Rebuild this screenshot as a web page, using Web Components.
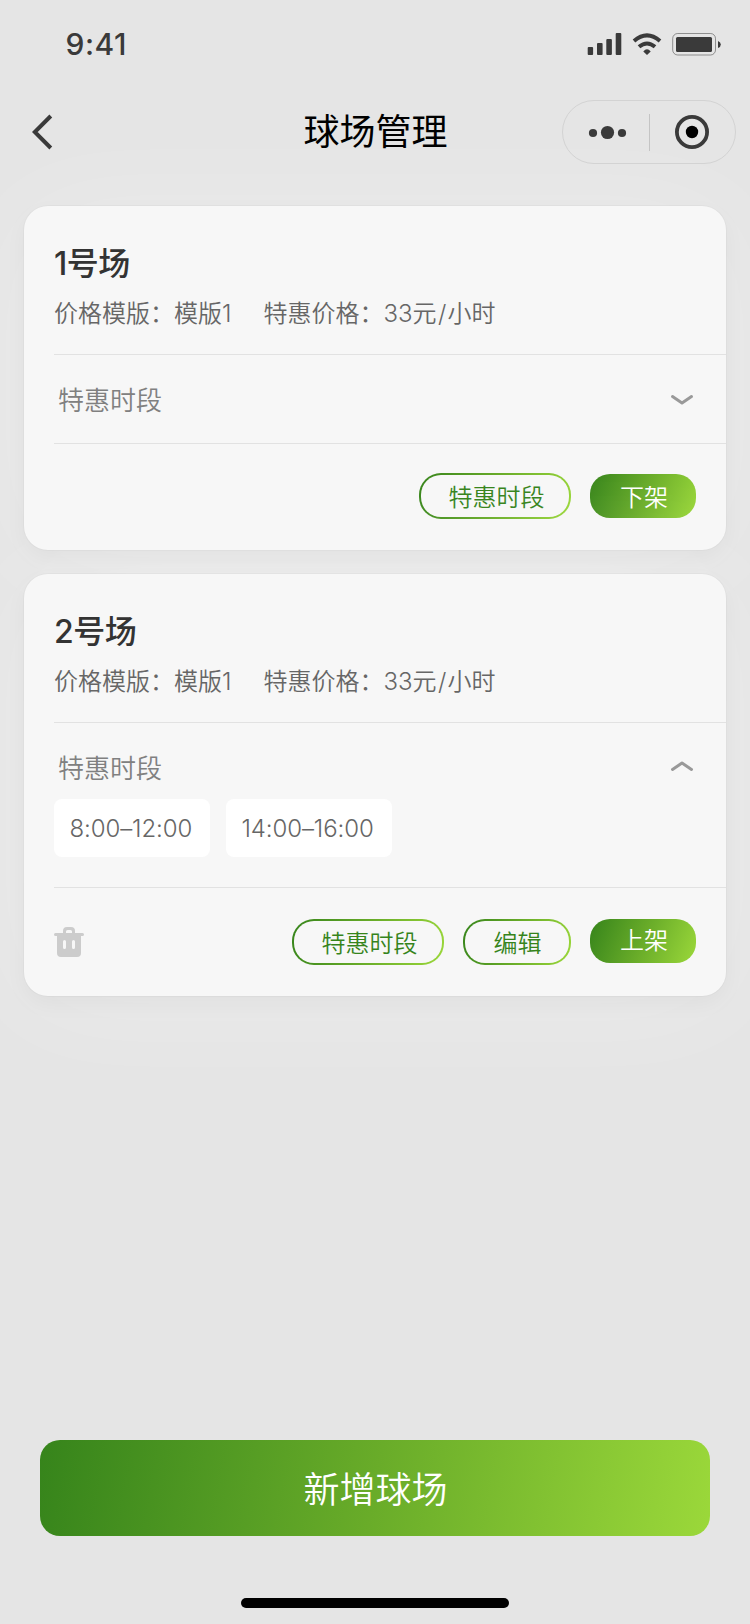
<!DOCTYPE html>
<html lang="zh-CN">
<head>
  <meta charset="UTF-8">
  <meta name="viewport" content="width=750">
  <title>球场管理</title>
  <style>
    body {
      margin: 0;
      background: #e5e5e5;
      color: #333;
      font-family: Inter, "Noto Sans CJK SC", sans-serif;
    }
  </style>
</head>
<body>
  <court-page>
    <status-bar slot="top" time="9:41"></status-bar>
    <nav-bar slot="top">球场管理</nav-bar>

    <court-card name="1号场" template="模版1" price="33元/小时">
      <pill-button slot="actions" style="--drop: 4px">特惠时段</pill-button>
      <pill-button slot="actions" filled style="--drop: 4px">下架</pill-button>
    </court-card>

    <court-card name="2号场" template="模版1" price="33元/小时" open removable>
      <time-chip slot="times">8:00–12:00</time-chip>
      <time-chip slot="times" style="--chip-width: 166px">14:00–16:00</time-chip>
      <pill-button slot="actions" style="--drop: 4px">特惠时段</pill-button>
      <pill-button slot="actions" style="--drop: 4px; --pill-width: 108px; --pad: 28.5px">编辑</pill-button>
      <pill-button slot="actions" filled>上架</pill-button>
    </court-card>

    <add-button slot="bottom">新增球场</add-button>
    <home-indicator slot="bottom"></home-indicator>
  </court-page>

  <script>
    class CourtPage extends HTMLElement {
      constructor() {
        super();
        this.attachShadow({ mode: "open" });
        this.shadowRoot.innerHTML = `
          <style>
            :host {
              display: flex;
              flex-direction: column;
              width: 750px;
              height: 1624px;
              overflow: hidden;
            }
            main {
              flex: 1;
              display: flex;
              flex-direction: column;
              gap: 24px;
              padding: 30px 24px 0;
            }
            header {
              position: relative;
              z-index: 1;
            }
          </style>
          <header><slot name="top"></slot></header>
          <main><slot></slot></main>
          <footer><slot name="bottom"></slot></footer>
        `;
      }
    }

    class StatusBar extends HTMLElement {
      connectedCallback() {
        this.attachShadow({ mode: "open" });
        this.shadowRoot.innerHTML = `
          <style>
            :host {
              display: flex;
              justify-content: space-between;
              align-items: center;
              box-sizing: border-box;
              height: 88px;
              padding: 0 29px 0 65.5px;
              color: #3a3a3a;
            }
            .time {
              font-size: 30px;
              font-weight: 450;
              line-height: 36px;
              letter-spacing: 0.5px;
            }
            svg { display: block; }
          </style>
          <span class="time">${this.getAttribute("time")}</span>
          <svg width="134" height="24" viewBox="587 32 134 24" fill="#3a3a3a">
            <rect x="587.7" y="47" width="5.4" height="8" rx="1"/>
            <rect x="597" y="43" width="5.6" height="12" rx="1"/>
            <rect x="606.3" y="39" width="5.6" height="16" rx="1"/>
            <rect x="615.7" y="33" width="5.6" height="22" rx="1"/>
            <g fill="none" stroke="#3a3a3a" stroke-width="4">
              <path d="M634 41Q647 29.8 660 41"/>
              <path d="M639 46.8Q647 40.2 655 46.8"/>
            </g>
            <path d="M643.3 51.4Q647 47 650.7 51.4L647 55Z"/>
            <rect x="672.7" y="33.5" width="42.8" height="21.5" rx="5" fill="none" stroke="#3a3a3a" stroke-opacity=".5"/>
            <rect x="676" y="37" width="36" height="15" rx="1.5"/>
            <path d="M718 41Q720.8 42 720.8 44.5T718 48Z"/>
          </svg>
        `;
      }
    }

    class NavBar extends HTMLElement {
      constructor() {
        super();
        this.attachShadow({ mode: "open" });
        this.shadowRoot.innerHTML = `
          <style>
            :host {
              display: grid;
              grid-template-columns: 1fr auto 1fr;
              align-items: center;
              box-sizing: border-box;
              height: 88px;
              padding: 0 13px 0 14px;
            }
            .back { display: block; margin: -1px 0 0 18px; }
            h1 {
              margin: 0;
              color: #000;
              font-size: 36px;
              font-weight: 400;
              line-height: 52px;
            }
            .capsule {
              justify-self: end;
              display: flex;
              align-items: center;
              box-sizing: border-box;
              width: 174px;
              height: 64px;
              margin-right: 1px;
              border: 1px solid #d3d3d3;
              border-radius: 32px;
            }
            .capsule svg { display: block; }
            .line {
              width: 1px;
              height: 37px;
              background: #c4c4c4;
            }
          </style>
          <svg class="back" width="22" height="36" viewBox="0 0 22 36" fill="none" stroke="#3a3a3a" stroke-width="4">
            <path d="M18.8 2L2.8 18L18.8 34"/>
          </svg>
          <h1><slot></slot></h1>
          <div class="capsule">
            <svg width="86" height="62" viewBox="0 0 86 62" fill="#3a3a3a">
              <circle cx="30" cy="32" r="4.1"/>
              <circle cx="44.5" cy="31.5" r="6.6"/>
              <circle cx="59" cy="32" r="4.1"/>
            </svg>
            <span class="line"></span>
            <svg width="85" height="62" viewBox="0 0 85 62">
              <circle cx="42" cy="31" r="15.1" fill="none" stroke="#3a3a3a" stroke-width="3.8"/>
              <circle cx="42" cy="31" r="6.2"/>
            </svg>
          </div>
        `;
      }
    }

    class CourtCard extends HTMLElement {
      connectedCallback() {
        this.attachShadow({ mode: "open" });
        this.render();
      }

      render() {
        const open = this.hasAttribute("open");
        const removable = this.hasAttribute("removable");
        const [amount, unit] = this.getAttribute("price").split("/");
        this.shadowRoot.innerHTML = `
          <style>
            :host {
              display: block;
              padding-left: 30px;
              border-radius: 24px;
              background: #f7f7f7;
              box-shadow:
                0 0 0 1px rgba(0, 0, 0, 0.025),
                0 8px 22px rgba(0, 20, 10, 0.04),
                0 7px 116px rgba(255, 255, 255, 0.3);
            }
            .head {
              height: 148px;
              border-bottom: 1px solid #e2e2e2;
            }
            h2 {
              margin: 0;
              padding-top: 35px;
              color: #333;
              font-size: 32px;
              font-weight: 500;
              line-height: 46px;
              letter-spacing: -0.5px;
            }
            .info {
              display: flex;
              color: #666;
              font-size: 24px;
              font-weight: 350;
              line-height: 34px;
              padding-top: 10px;
            }
            .info > span:first-child { width: 209.5px; }
            .slash { margin: 0 1px 0 1.5px; }
            .times {
              border-bottom: 1px solid #e2e2e2;
              padding-bottom: ${open ? 30 : 12}px;
            }
            .toggle {
              display: flex;
              justify-content: space-between;
              align-items: center;
              box-sizing: border-box;
              height: 76px;
              padding: 16px 32px 0 4px;
              color: #808080;
              font-size: 26px;
              font-weight: 350;
              line-height: 36px;
            }
            .toggle svg { transform: translateY(${open ? -3 : -1}px); }
            .chips {
              display: flex;
              gap: 16px;
            }
            .actions {
              display: flex;
              justify-content: flex-end;
              align-items: ${removable ? "flex-start" : "center"};
              gap: 19px;
              padding: ${removable ? 31 : 29}px 30px 31px 0;
            }
            .trash {
              align-self: center;
              margin-right: auto;
            }
          </style>
          <div class="head">
            <h2>${this.getAttribute("name")}</h2>
            <div class="info">
              <span>价格模版：${this.getAttribute("template")}</span>
              <span>特惠价格：${amount}<span class="slash">/</span>${unit}</span>
            </div>
          </div>
          <div class="times">
            <div class="toggle">
              <span>特惠时段</span>
              <svg width="24" height="12" viewBox="0 0 24 12" fill="none" stroke="#999" stroke-width="3" stroke-linecap="round" stroke-linejoin="round">
                <path d="${open ? "M2.5 9.4L12 3L21.5 9.4" : "M2.5 2.6L12 9L21.5 2.6"}"/>
              </svg>
            </div>
            ${open ? `<div class="chips"><slot name="times"></slot></div>` : ""}
          </div>
          <div class="actions">
            ${removable ? `
              <svg class="trash" width="30" height="30" viewBox="0 0 30 30">
                <path fill="#ccc" fill-rule="evenodd" d="M9 6V4a4 4 0 0 1 4-4h4a4 4 0 0 1 4 4v2h7.500a1.500 1.500 0 0 1 0 3H27v17a4 4 0 0 1-4 4H7a4 4 0 0 1-4-4V9H1.500a1.500 1.500 0 0 1 0-3zM12 6h6V4.500A1.500 1.500 0 0 0 16.500 3h-3A1.500 1.500 0 0 0 12 4.500zM10.500 13A1.500 1.500 0 0 0 9 14.500v6a1.500 1.500 0 0 0 3 0v-6A1.500 1.500 0 0 0 10.500 13zM19.500 13a1.500 1.500 0 0 0-1.500 1.500v6a1.500 1.500 0 0 0 3 0v-6a1.500 1.500 0 0 0-1.500-1.500z"/>
              </svg>
            ` : ""}
            <slot name="actions"></slot>
          </div>
        `;
      }
    }

    class PillButton extends HTMLElement {
      constructor() {
        super();
        this.attachShadow({ mode: "open" });
        this.shadowRoot.innerHTML = `
          <style>
            :host { display: block; }
            button {
              display: block;
              box-sizing: border-box;
              width: var(--pill-width, 152px);
              height: 46px;
              margin: 0;
              padding: var(--drop, 0px) 0 0 var(--pad, 27.5px);
              border: 2px solid transparent;
              border-radius: 22px;
              background:
                linear-gradient(#f7f7f7, #f7f7f7) padding-box,
                linear-gradient(105deg, #36841b, #69ac29 50%, #9bd83a) border-box;
              color: #36841b;
              font: inherit;
              font-size: 24px;
              font-weight: 350;
              line-height: 34px;
              text-align: left;
              white-space: nowrap;
            }
            :host([filled]) button {
              width: 106px;
              height: 44px;
              padding: var(--drop, 0px) 0 0 30px;
              border: 0;
              border-radius: 20px;
              background: linear-gradient(112deg, #36841b, #69ac29 50%, #9bd83a);
              color: #fff;
            }
          </style>
          <button><slot></slot></button>
        `;
      }
    }

    class TimeChip extends HTMLElement {
      constructor() {
        super();
        this.attachShadow({ mode: "open" });
        this.shadowRoot.innerHTML = `
          <style>
            :host {
              display: block;
              box-sizing: border-box;
              width: var(--chip-width, 156px);
              height: 58px;
              padding-left: 15.5px;
              border-radius: 8px;
              background: #fff;
              color: #666;
              font-size: 24px;
              font-weight: 350;
              line-height: 60px;
              white-space: nowrap;
              letter-spacing: -0.1px;
            }
          </style>
          <slot></slot>
        `;
      }
    }

    class AddButton extends HTMLElement {
      constructor() {
        super();
        this.attachShadow({ mode: "open" });
        this.shadowRoot.innerHTML = `
          <style>
            :host {
              display: block;
              padding: 0 40px;
            }
            button {
              display: block;
              width: 100%;
              height: 96px;
              margin: 0;
              padding: 4px 0 0 1px;
              border: 0;
              border-radius: 20px;
              background: linear-gradient(100deg, #36841b, #69ac29 50%, #9bd83a);
              color: #fff;
              font: inherit;
              font-size: 36px;
              font-weight: 350;
              line-height: 50px;
            }
          </style>
          <button><slot></slot></button>
        `;
      }
    }

    class HomeIndicator extends HTMLElement {
      constructor() {
        super();
        this.attachShadow({ mode: "open" });
        this.shadowRoot.innerHTML = `
          <style>
            :host {
              display: flex;
              justify-content: center;
              padding: 62px 0 16px;
            }
            span {
              width: 268px;
              height: 10px;
              border-radius: 5px;
              background: #000;
            }
          </style>
          <span></span>
        `;
      }
    }

    customElements.define("court-page", CourtPage);
    customElements.define("status-bar", StatusBar);
    customElements.define("nav-bar", NavBar);
    customElements.define("court-card", CourtCard);
    customElements.define("pill-button", PillButton);
    customElements.define("time-chip", TimeChip);
    customElements.define("add-button", AddButton);
    customElements.define("home-indicator", HomeIndicator);
  </script>
</body>
</html>
